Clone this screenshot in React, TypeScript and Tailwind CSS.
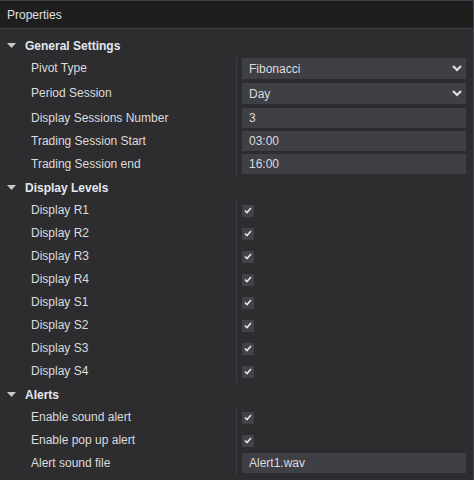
import React from "react";

type Row =
  | { label: string; kind: "select"; value: string }
  | { label: string; kind: "text"; value: string }
  | { label: string; kind: "check" };

const sections: { title: string; rows: Row[] }[] = [
  {
    title: "General Settings",
    rows: [
      { label: "Pivot Type", kind: "select", value: "Fibonacci" },
      { label: "Period Session", kind: "select", value: "Day" },
      { label: "Display Sessions Number", kind: "text", value: "3" },
      { label: "Trading Session Start", kind: "text", value: "03:00" },
      { label: "Trading Session end", kind: "text", value: "16:00" },
    ],
  },
  {
    title: "Display Levels",
    rows: [
      { label: "Display R1", kind: "check" },
      { label: "Display R2", kind: "check" },
      { label: "Display R3", kind: "check" },
      { label: "Display R4", kind: "check" },
      { label: "Display S1", kind: "check" },
      { label: "Display S2", kind: "check" },
      { label: "Display S3", kind: "check" },
      { label: "Display S4", kind: "check" },
    ],
  },
  {
    title: "Alerts",
    rows: [
      { label: "Enable sound alert", kind: "check" },
      { label: "Enable pop up alert", kind: "check" },
      { label: "Alert sound file", kind: "text", value: "Alert1.wav" },
    ],
  },
];

function Chevron() {
  return (
    <svg width="10" height="7" viewBox="0 0 10 7" className="block">
      <polyline points="1,1 5,5 9,1" fill="none" stroke="#e0e0e0" strokeWidth="2.2" />
    </svg>
  );
}

function Check() {
  return (
    <div className="w-[12px] h-[12px] bg-[#42424a] flex items-center justify-center">
      <svg width="8" height="7" viewBox="0 0 8 7" className="block">
        <polyline points="1,3.5 3,5.5 7,1" fill="none" stroke="#e8e8e8" strokeWidth="1.6" />
      </svg>
    </div>
  );
}

function Value({ row }: { row: Row }) {
  if (row.kind === "check") {
    return <Check />;
  }
  if (row.kind === "select") {
    return (
      <div className="w-[224px] h-[21px] mt-[1px] bg-[#3f3f46] flex items-center justify-between pl-[7px] pr-[4px] text-[#dcdcdc]">
        <span>{row.value}</span>
        <Chevron />
      </div>
    );
  }
  return (
    <div className="w-[224px] h-[20px] mt-[1px] bg-[#3f3f46] flex items-center pl-[7px] text-[#dcdcdc]">
      <span>{row.value}</span>
    </div>
  );
}

export default function App() {
  return (
    <div
      className="w-[474px] h-[480px] bg-[#2d2d30] border-r border-[#46464c] overflow-hidden text-[12px] leading-none text-[#dcdcdc]"
      style={{ fontFamily: '"Liberation Sans", Arial, sans-serif' }}
    >
      <div className="h-[29px] bg-[#1e1e1e] border-t border-b border-[#3f3f46] flex items-center pl-[7px] text-[#e0e0e0]">
        Properties
      </div>
      <div className="pt-[5px]">
        {sections.map((s) => (
          <div key={s.title}>
            <div className="h-[23px] flex items-center">
              <div className="w-[25px] flex justify-start pl-[7px]">
                <svg width="9" height="5" viewBox="0 0 9 5" className="block">
                  <polygon points="0,0 9,0 4.5,5" fill="#c8c8c8" />
                </svg>
              </div>
              <span className="font-bold text-[#e4e8ee] text-[12px]">{s.title}</span>
            </div>
            {s.rows.map((r) => (
              <div
                key={r.label}
                className={`flex ${r.kind === "select" ? "h-[25px]" : "h-[23px]"}`}
              >
                <div className="w-[236px] h-[22px] pl-[31px] flex items-center">{r.label}</div>
                <div
                  className={`flex-1 border-l border-[#3b3b41] pl-[5px] flex ${
                    r.kind === "check" ? "items-center" : "items-start"
                  }`}
                >
                  <Value row={r} />
                </div>
              </div>
            ))}
          </div>
        ))}
      </div>
    </div>
  );
}
